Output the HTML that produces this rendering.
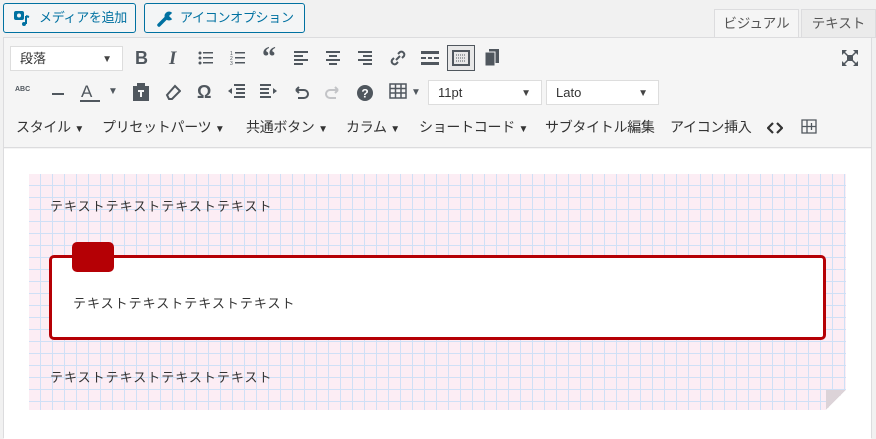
<!DOCTYPE html><html><head><meta charset="utf-8"><style>
*{box-sizing:border-box;margin:0;padding:0}
body{width:876px;height:438px;background:#f1f1f1;font-family:"Liberation Sans","Noto Sans CJK JP",sans-serif;position:relative;overflow:hidden;color:#32373c}
.btn{position:absolute;top:3px;height:30px;border:1px solid #0071a1;border-radius:3px;background:#f3f5f6;color:#0071a1;font-size:13px;line-height:28px;padding-left:35px;white-space:nowrap;letter-spacing:-0.3px}
.tab{position:absolute;top:9px;height:29px;font-size:13.5px;line-height:28px;text-align:center;color:#555;white-space:nowrap}
.wrap{position:absolute;left:3px;top:37px;width:869px;height:401px;border:1px solid #dcdcde;background:#f5f5f5}
.tb{position:absolute;left:0;top:0;width:867px;height:110px;border-bottom:1px solid #dcdcde}
.ic{position:absolute;font-size:17px;color:#50575e;font-weight:bold}
.sel{position:absolute;background:#fff;border:1px solid #ddd;font-size:13px;line-height:23px;padding-left:9px;height:25px;color:#333}
.sel:after{content:"▼";position:absolute;right:10px;top:1px;font-size:10px;color:#444}
.menu{position:absolute;top:79px;font-size:14px;color:#333;white-space:nowrap;letter-spacing:-0.3px}
.body{position:absolute;left:0;top:111px;width:867px;height:290px;background:#fff}
.paper{position:absolute;left:25px;top:25px;width:817px;height:236px;background-color:#fcedf4;
background-image:linear-gradient(#cfe0f6 1px,transparent 1px),linear-gradient(90deg,#cfe0f6 1px,transparent 1px);background-size:12px 12px;background-position:-1px -1px}
.t{position:absolute;font-size:13px;letter-spacing:1px;color:#333}
.ln{position:absolute;height:2px;background:#50575e}
</style></head><body>
<div class="btn" style="left:3px;width:133px"><svg style="position:absolute;left:9px;top:6px" width="18" height="17" viewBox="0 0 18 17"><rect x="1" y="1" width="10" height="9" rx="2" fill="#0071a1"/><circle cx="6" cy="5.5" r="2" fill="#f3f5f6"/><path d="M13 6v8M13 6l3 1" stroke="#0071a1" stroke-width="2" fill="none"/><circle cx="11" cy="14" r="2" fill="#0071a1"/></svg>メディアを追加</div>
<div class="btn" style="left:144px;width:161px"><svg style="position:absolute;left:12px;top:7px" width="18" height="16" viewBox="0 0 18 16"><path d="M2 14L9 7" stroke="#0071a1" stroke-width="3.5" stroke-linecap="round"/><circle cx="12" cy="5" r="4.5" fill="#0071a1"/><rect x="12" y="0" width="6" height="5" fill="#f3f5f6" transform="rotate(45 12 5)"/></svg>アイコンオプション</div>
<div class="tab" style="left:714px;width:85px;background:#f5f5f5;border:1px solid #dcdcde;border-bottom:none;height:30px">ビジュアル</div>
<div class="tab" style="left:801px;width:75px;background:#ebebeb;border:1px solid #dcdcde">テキスト</div>
<div class="wrap">
<div class="tb">
<div class="sel" style="left:6px;top:8px;width:113px">段落</div>
<div class="ic" style="left:131px;top:10px;font-size:18px">B</div>
<div class="ic" style="left:165px;top:10px;font-style:italic;font-family:'Liberation Serif';font-size:19px">I</div>
<svg style="position:absolute;left:194px;top:13px" width="16" height="14"><g fill="#50575e"><circle cx="2" cy="2" r="1.5"/><circle cx="2" cy="7" r="1.5"/><circle cx="2" cy="12" r="1.5"/><rect x="5" y="1" width="10" height="1.5"/><rect x="5" y="6" width="10" height="1.5"/><rect x="5" y="11" width="10" height="1.5"/></g></svg>
<svg style="position:absolute;left:226px;top:12px" width="16" height="15"><g fill="#50575e"><text x="0" y="5" font-size="5">1</text><text x="0" y="10" font-size="5">2</text><text x="0" y="15" font-size="5">3</text><rect x="5" y="2" width="10" height="1.5"/><rect x="5" y="7" width="10" height="1.5"/><rect x="5" y="12" width="10" height="1.5"/></g></svg>
<div class="ic" style="left:258px;top:4px;font-size:28px;font-family:'Liberation Serif'">“</div>
<svg style="position:absolute;left:290px;top:12px" width="16" height="15"><g fill="#50575e"><rect y="1" width="14" height="2"/><rect y="5" width="9" height="2"/><rect y="9" width="14" height="2"/><rect y="13" width="9" height="2"/></g></svg>
<svg style="position:absolute;left:322px;top:12px" width="16" height="15"><g fill="#50575e"><rect y="1" width="14" height="2"/><rect x="3" y="5" width="8" height="2"/><rect y="9" width="14" height="2"/><rect x="3" y="13" width="8" height="2"/></g></svg>
<svg style="position:absolute;left:354px;top:12px" width="16" height="15"><g fill="#50575e"><rect y="1" width="14" height="2"/><rect x="5" y="5" width="9" height="2"/><rect y="9" width="14" height="2"/><rect x="5" y="13" width="9" height="2"/></g></svg>
<svg style="position:absolute;left:385px;top:11px" width="18" height="18"><path d="M7 11l4-4M5 9l-2 2a3 3 0 004 4l2-2M13 9l2-2a3 3 0 00-4-4l-2 2" stroke="#50575e" stroke-width="2" fill="none"/></svg>
<svg style="position:absolute;left:417px;top:13px" width="18" height="14"><rect y="0" width="18" height="3" fill="#50575e"/><rect y="6" width="5" height="2" fill="#50575e"/><rect x="7" y="6" width="4" height="2" fill="#50575e"/><rect x="13" y="6" width="5" height="2" fill="#50575e"/><rect y="11" width="18" height="3" fill="#50575e"/></svg>
<div style="position:absolute;left:443px;top:7px;width:28px;height:26px;border:1px solid #50575e;background:#e8e8e8"><svg style="position:absolute;left:4px;top:4px" width="18" height="16"><rect x="1" y="1" width="16" height="14" fill="none" stroke="#50575e" stroke-width="2"/><path d="M4 5h10M4 8h10M4 11h10" stroke="#50575e" stroke-dasharray="1 1"/></svg></div>
<svg style="position:absolute;left:481px;top:11px" width="14" height="18"><rect x="4" y="0" width="10" height="14" fill="#50575e"/><rect x="0" y="3" width="10" height="14" fill="#50575e" stroke="#f5f5f5"/></svg>
<svg style="position:absolute;left:838px;top:12px" width="16" height="16"><g fill="#50575e"><path d="M0 0h5L0 5zM16 0h-5l5 5zM0 16h5L0 11zM16 16h-5l5-5z"/><rect x="5" y="5" width="6" height="6"/><path d="M2 2l12 12M14 2L2 14" stroke="#50575e" stroke-width="1.5"/></g></svg>
<div class="ic" style="left:11px;top:48px;font-size:7px">ABC</div>
<div class="ln" style="left:48px;top:55px;width:12px"></div>
<div class="ic" style="left:77px;top:44px;font-weight:normal;font-size:17px">A</div><div class="ln" style="left:76px;top:62px;width:20px"></div>
<div class="ic" style="left:104px;top:48px;font-size:10px">▼</div>
<svg style="position:absolute;left:129px;top:45px" width="16" height="18"><rect x="0" y="3" width="16" height="15" fill="#50575e"/><rect x="4" y="0" width="8" height="5" fill="#50575e"/><rect x="5" y="7" width="6" height="2" fill="#f5f5f5"/><rect x="7" y="9" width="2" height="5" fill="#f5f5f5"/></svg>
<svg style="position:absolute;left:161px;top:46px" width="16" height="16"><path d="M2 11l8-9 5 5-8 8H4z" fill="none" stroke="#50575e" stroke-width="2"/></svg>
<div class="ic" style="left:193px;top:44px;font-size:18px">Ω</div>
<svg style="position:absolute;left:224px;top:46px" width="18" height="16"><g fill="#50575e"><rect x="6" y="0" width="11" height="2"/><rect x="8" y="4" width="9" height="2"/><rect x="8" y="8" width="9" height="2"/><rect x="6" y="12" width="11" height="2"/><path d="M0 7l4-3v6z"/></g></svg>
<svg style="position:absolute;left:256px;top:46px" width="18" height="16"><g fill="#50575e"><rect x="0" y="0" width="11" height="2"/><rect x="0" y="4" width="9" height="2"/><rect x="0" y="8" width="9" height="2"/><rect x="0" y="12" width="11" height="2"/><path d="M17 7l-4-3v6z"/></g></svg>
<svg style="position:absolute;left:288px;top:47px" width="18" height="16"><path d="M4 5h8a4 4 0 010 8H6M4 5l3-3M4 5l3 3" stroke="#50575e" stroke-width="2" fill="none"/></svg>
<svg style="position:absolute;left:320px;top:47px" width="18" height="16"><path d="M14 5H6a4 4 0 000 8h6M14 5l-3-3M14 5l-3 3" stroke="#c3c4c7" stroke-width="2" fill="none"/></svg>
<svg style="position:absolute;left:353px;top:47px" width="16" height="16"><circle cx="8" cy="8" r="8" fill="#50575e"/><text x="8" y="12.5" font-size="12" font-weight="bold" fill="#fff" text-anchor="middle" font-family="Liberation Sans">?</text></svg>
<svg style="position:absolute;left:385px;top:45px" width="18" height="16"><path d="M1 1h16v14H1zM1 5.5h16M1 10h16M6.5 1v14M12 1v14" stroke="#50575e" stroke-width="1.5" fill="none"/></svg>
<div class="ic" style="left:407px;top:49px;font-size:10px">▼</div>
<div class="sel" style="left:424px;top:42px;width:114px">11pt</div>
<div class="sel" style="left:542px;top:42px;width:113px">Lato</div>
<div class="menu" style="left:12px">スタイル <small style="font-size:10px">▼</small></div>
<div class="menu" style="left:98px">プリセットパーツ <small style="font-size:10px">▼</small></div>
<div class="menu" style="left:242px">共通ボタン <small style="font-size:10px">▼</small></div>
<div class="menu" style="left:342px">カラム <small style="font-size:10px">▼</small></div>
<div class="menu" style="left:415px">ショートコード <small style="font-size:10px">▼</small></div>
<div class="menu" style="left:541px">サブタイトル編集</div>
<div class="menu" style="left:666px">アイコン挿入</div>
<svg style="position:absolute;left:763px;top:84px" width="16" height="12"><path d="M6 1L1 6l5 5M10 1l5 5-5 5" stroke="#333" stroke-width="2.2" fill="none"/></svg>
<svg style="position:absolute;left:797px;top:81px" width="16" height="15"><path d="M1 1h14v13H1zM1 7.5h14M6 1v13M10.5 4v7M7.5 7.5h6" stroke="#50575e" stroke-width="1.3" fill="none"/></svg>
</div>
<div class="body">
<div class="paper">
<div class="t" style="left:21px;top:22px">テキストテキストテキストテキスト</div>
<div style="position:absolute;left:20px;top:81px;width:777px;height:85px;background:#fff;border:3px solid #b50005;border-radius:5px"></div>
<div style="position:absolute;left:43px;top:68px;width:42px;height:30px;background:#b50005;border-radius:5px"></div>
<div class="t" style="left:44px;top:119px">テキストテキストテキストテキスト</div>
<div class="t" style="left:21px;top:193px">テキストテキストテキストテキスト</div>
<div style="position:absolute;right:0;bottom:0;width:20px;height:20px;background:linear-gradient(135deg,#dcd3d8 50%,#fff 50%)"></div>
</div>
</div>
</div>
</body></html>
